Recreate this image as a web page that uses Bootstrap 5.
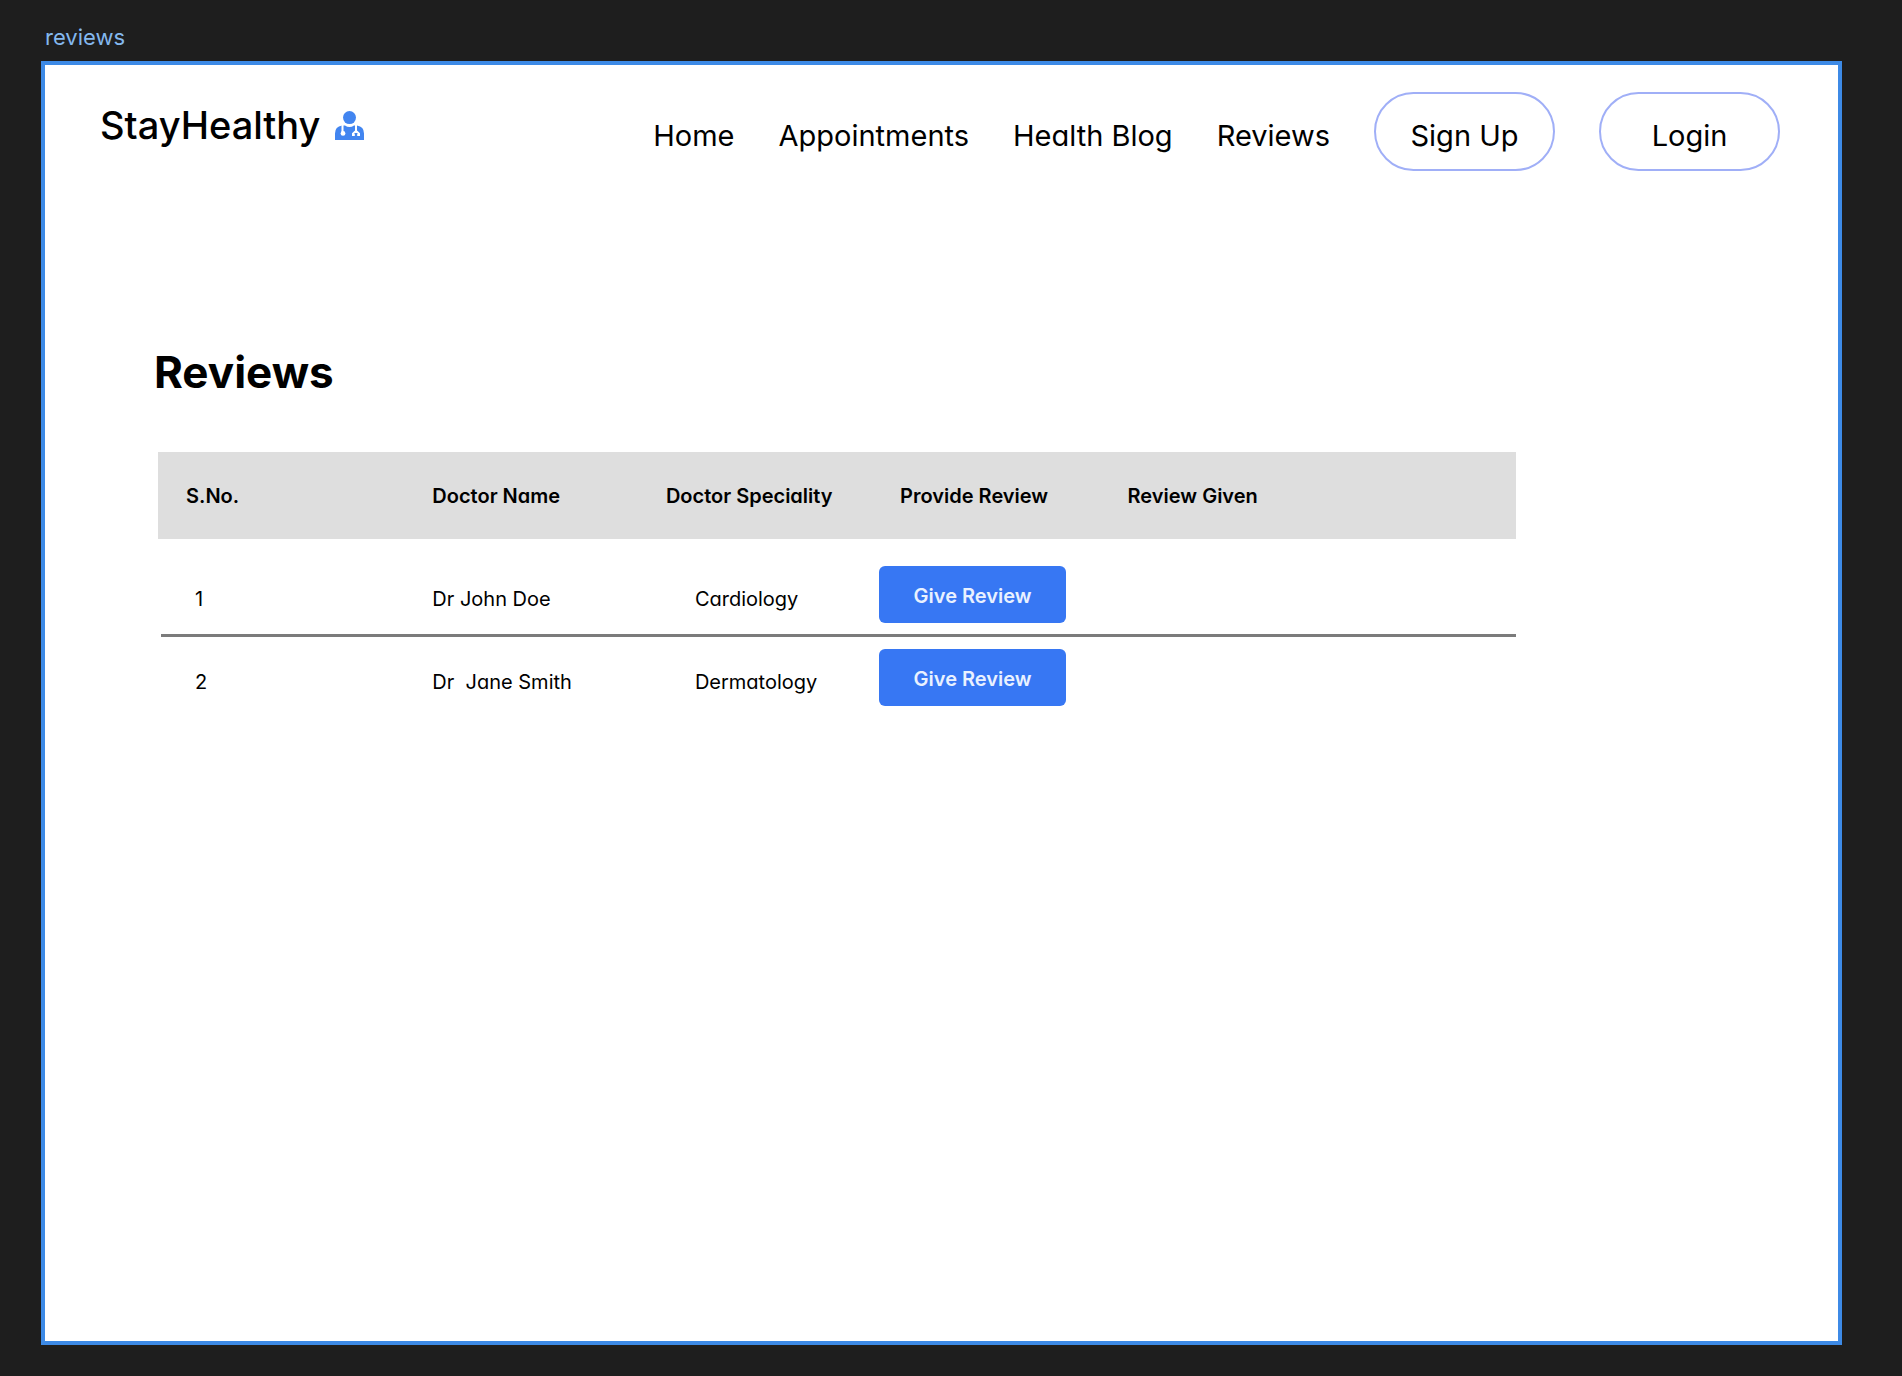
<!DOCTYPE html>
<html lang="en">
<head>
<meta charset="utf-8">
<meta name="viewport" content="width=device-width, initial-scale=1">
<title>StayHealthy – Reviews</title>
<link href="https://cdn.jsdelivr.net/npm/bootstrap@5.3.0/dist/css/bootstrap.min.css" rel="stylesheet">
<style>
  body { background: #1e1e1e; color: #000; font-family: Inter, "Open Sans", sans-serif; }
  .canvas-area { padding: 17px 60px 31px 41px; }
  .frame-label { color: #84b8ee; font-size: 22px; line-height: 41px; padding: 0 4px 3px; }
  .artboard { background: #fff; border: 4px solid #3d8ae6; }
  .site-nav { padding: 27px 58px 0 55px; }
  .brand-link { color: #000; font-size: 38px; line-height: 46px; font-weight: 500; gap: 15px; margin-top: 10px; }
  .brand-link svg { width: 29px; height: 29px; }
  .geo { font-feature-settings: "cv11"; }
  .menu-list { gap: 44px; font-size: 29px; line-height: 36px; }
  .menu-list a { color: #000; text-decoration: none; }
  .menu-list .plain-link { display: block; padding-top: 26px; }
  .pill { display: block; width: 181px; height: 79px; padding: 24px 0 0; border: 2px solid #a0aff7; border-radius: 40px; text-align: center; }
  .content-area { padding: 173px 109px 60px 109px; }
  .page-title { font-size: 44px; line-height: 56px; font-weight: 700; margin: 0 0 52px; }
  .review-table { width: 1358px; max-width: 100%; margin-left: 4px; table-layout: fixed; font-size: 20px; line-height: 30px; }
  .review-table th { background: #dedede; height: 87px; padding: 0; font-weight: 600; }
  .review-table td { padding: 0 0 23px; vertical-align: bottom; white-space: pre; }
  .review-table td.action-cell { padding: 12px 0 14px; }
  .review-table tbody tr:first-child td.action-cell { padding-top: 27px; }
  .review-table tbody tr:first-child { background: linear-gradient(#7b7b7b, #7b7b7b) no-repeat right bottom / calc(100% - 3px) 3px; }
  .review-table th:first-child { padding-left: 28px; }
  .review-table td:first-child { padding-left: 37px; }
  .review-table td.speciality { padding-left: 29px; }
  .review-table .col-action { padding-left: 21px; }
  .review-btn { display: block; width: 187px; height: 57px; padding: 2px 0 0; background: #3777f3; color: #e9f1ff; border: 0; border-radius: 6px; font-size: 20px; font-weight: 600; }
  .review-btn:hover { background: #2766e0; color: #fff; }
</style>
</head>
<body>
<div class="canvas-area d-flex flex-column min-vh-100">
  <div class="frame-label">reviews</div>
  <div class="artboard flex-grow-1">
    <header>
      <nav class="site-nav d-flex flex-wrap justify-content-between align-items-start">
        <a class="brand-link d-flex align-items-center text-decoration-none" href="#">StayHealthy
          <svg viewBox="0 0 29 29" aria-hidden="true">
            <circle cx="14.5" cy="6.6" r="6.5" fill="#4285f0"/>
            <path d="M0 29V22.500Q0 15.500 7 14.500L10 14.500Q14.500 17.500 19 14.500L22 14.500Q29 15.500 29 22.500V29Z" fill="#4285f0"/>
            <path d="M7.500 14V22M21 14V20M18 24.500V22.600L21 19.800L24 22.600V24.500" fill="none" stroke="#fff" stroke-width="2"/>
            <circle cx="8" cy="22.400" r="2.400" fill="#fff"/>
            <path d="M17 23H19.800V25H17ZM22.200 23H25V25H22.200Z" fill="#fff"/>
          </svg>
        </a>
        <ul class="menu-list geo list-unstyled d-flex flex-wrap mb-0">
          <li><a class="plain-link" href="#">Home</a></li>
          <li><a class="plain-link" href="#">Appointments</a></li>
          <li><a class="plain-link" href="#">Health Blog</a></li>
          <li><a class="plain-link" href="#">Reviews</a></li>
          <li><a class="pill" href="#">Sign Up</a></li>
          <li><a class="pill" href="#">Login</a></li>
        </ul>
      </nav>
    </header>
    <main class="content-area geo">
      <h1 class="page-title">Reviews</h1>
      <table class="review-table">
        <colgroup>
          <col style="width:20.2%"><col style="width:17.2%"><col style="width:15.7%"><col style="width:18.3%"><col>
        </colgroup>
        <thead>
          <tr>
            <th scope="col">S.No.</th><th scope="col">Doctor Name</th><th scope="col">Doctor Speciality</th><th scope="col" class="col-action">Provide Review</th><th scope="col">Review Given</th>
          </tr>
        </thead>
        <tbody>
          <tr><td>1</td><td>Dr John Doe</td><td class="speciality">Cardiology</td><td class="action-cell"><button type="button" class="btn review-btn">Give Review</button></td><td></td></tr>
          <tr><td>2</td><td>Dr  Jane Smith</td><td class="speciality">Dermatology</td><td class="action-cell"><button type="button" class="btn review-btn">Give Review</button></td><td></td></tr>
        </tbody>
      </table>
    </main>
  </div>
</div>
<script src="https://cdn.jsdelivr.net/npm/bootstrap@5.3.0/dist/js/bootstrap.bundle.min.js"></script>
</body>
</html>
